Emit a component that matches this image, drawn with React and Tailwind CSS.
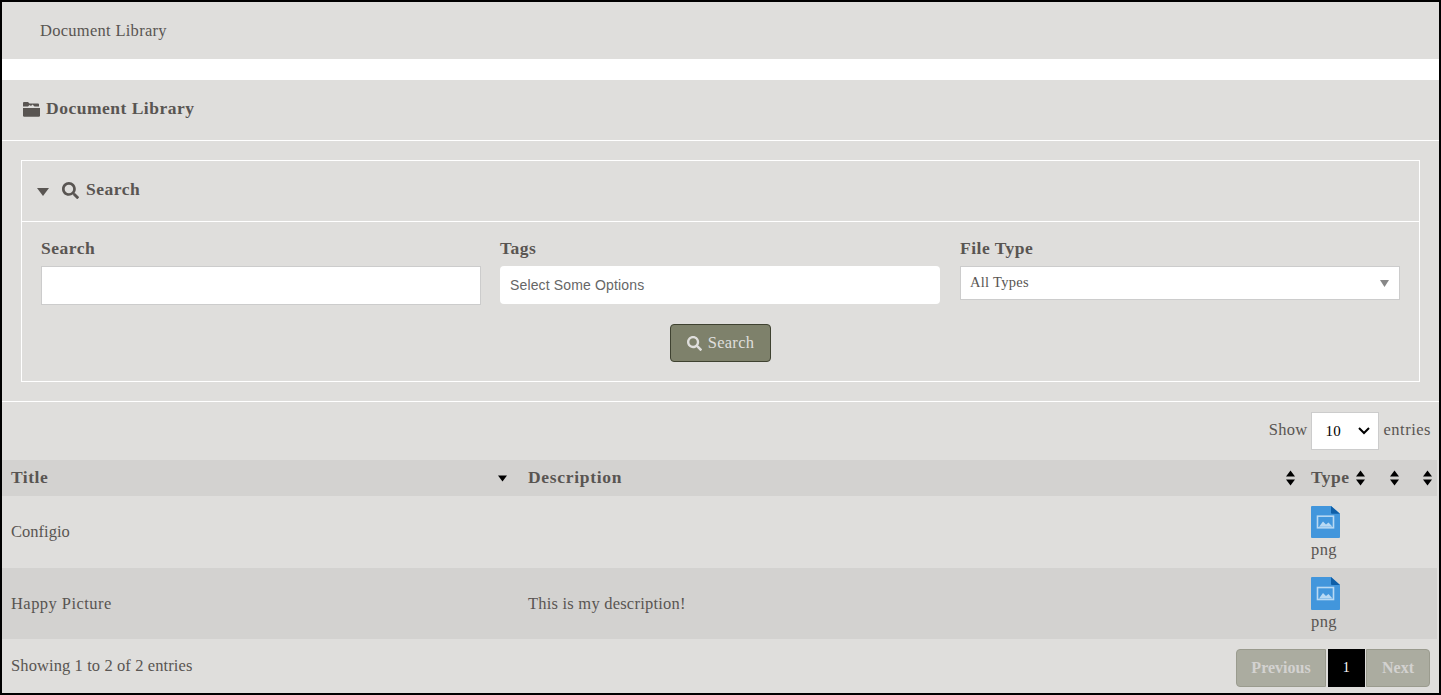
import React from "react";
import { FaSearch } from "react-icons/fa";

const serif = "font-['Georgia','Liberation_Serif',serif]";
const bold = "font-bold text-[17.5px] tracking-[0.5px]";

function Sort() {
  return (
    <svg width="9" height="16" viewBox="0 0 9 16" className="shrink-0" fill="#000">
      <path d="M4.5 0.5 L9 6.5 H0 Z" />
      <path d="M0 9.5 H9 L4.5 15.5 Z" />
    </svg>
  );
}

function DownOnly() {
  return (
    <svg width="9" height="7" viewBox="0 0 9 7" className="shrink-0" fill="#000"><path d="M0 0.5 H9 L4.5 6.5 Z" /></svg>
  );
}

function FileImg({ h }) {
  return (
    <svg width="29" height={h} viewBox="0 0 29 33" preserveAspectRatio="none">
      <path d="M1 0 H20 L29 8 V32 a1 1 0 0 1-1 1 H1 a1 1 0 0 1-1-1 V1 a1 1 0 0 1 1-1Z" fill="#4296dc" />
      <path d="M20 0 L29 8 H21 a1 1 0 0 1-1-1Z" fill="#0f5fa8" />
      <rect x="6.5" y="10.5" width="16" height="12" fill="none" stroke="#b9d9f3" strokeWidth="1.6" />
      <path d="M8 21.5 L12 16 L15 19 L17.5 17 L21.5 21.5Z" fill="#b9d9f3" />
    </svg>
  );
}

function FolderIcon() {
  return (
    <svg width="17" height="15" viewBox="0 0 17 15" fill="#595552">
      <path d="M0 4.5 V1 Q0 0 1 0 H5 L6.5 1.5 H15 Q16 1.5 16 2.5 V4.5 H11.5 L9.5 2.5 L8 4 L6.5 3 L5 4.5Z" />
      <path d="M0 6 H17 V13.5 Q17 14.8 15.7 14.8 H1.3 Q0 14.8 0 13.5Z" />
    </svg>
  );
}

export default function App() {
  return (
    <div className={`${serif} w-[1441px] h-[695px] overflow-hidden border-2 border-black bg-white text-[#595552] text-[16.5px] tracking-[0.28px] leading-none`}>
      <div className="h-[57px] bg-[#dfdedc] flex items-center pl-[38px] pt-[2px]">Document Library</div>
      <div className="h-[21px]" />
      <div className="bg-[#dfdedc] h-[613px] flex flex-col">
        <div className={`h-[61px] shrink-0 border-b border-white flex items-center pl-[21px] gap-[6px] pb-[2px] ${bold}`}>
          <FolderIcon />
          <span>Document Library</span>
        </div>
        <div className="h-[261px] shrink-0 border-b border-white px-[19px] pt-[19px]">
          <div className="h-[222px] border border-white flex flex-col">
            <div className={`h-[61px] shrink-0 border-b border-white flex items-center pl-[15px] pb-[2px] ${bold}`}>
              <svg width="12" height="8" viewBox="0 0 12 8" fill="#595552" className="mt-[3px]"><path d="M0 0 H12 L6 8Z" /></svg>
              <FaSearch className="ml-[13px] w-[17px] h-[17px]" />
              <span className="ml-[7px]">Search</span>
            </div>
            <div className="flex-1 px-[19px] pt-[18px]">
              <div className="grid grid-cols-[440px_440px_441px] gap-x-[19px]">
                <div>
                  <div className={`${bold} h-[26px]`}>Search</div>
                  <input aria-label="Search" className="block w-full h-[39px] bg-white border border-[#ccc]" />
                </div>
                <div>
                  <div className={`${bold} h-[26px]`}>Tags</div>
                  <div className="w-full h-[38px] bg-white rounded-[4px] flex items-center pl-[10px] font-['Liberation_Sans',sans-serif] tracking-[0.15px] text-[14px] text-[#666]">Select Some Options</div>
                </div>
                <div className="ml-px">
                  <div className={`${bold} h-[26px]`}>File Type</div>
                  <div className="w-full h-[34px] bg-white border border-[#ccc] flex items-center pl-[9px] pr-[10px] justify-between text-[14.5px]">
                    <span className="pb-[2px]">All Types</span>
                    <svg width="9" height="7" viewBox="0 0 9 7" fill="#888"><path d="M0 0 H9 L4.5 7Z" /></svg>
                  </div>
                </div>
              </div>
              <div className="flex justify-center mt-[19px]">
                <button className="w-[101px] h-[38px] rounded-[4px] bg-[#7e816b] border border-[#3f4231] text-[#dfdedc] flex items-center justify-center gap-[6px]">
                  <FaSearch className="w-[15px] h-[15px]" />
                  <span>Search</span>
                </button>
              </div>
            </div>
          </div>
        </div>
        <div className="h-[58px] shrink-0 flex items-center justify-end pr-[8px] gap-[3px]">
          <span className="pb-[2px]">Show</span>
          <div className="w-[68px] h-[38px] bg-white border border-[#ccc] flex items-center justify-between pl-[14px] pr-[8px] text-black text-[15px] mr-[2px]">
            <span>10</span>
            <svg width="12" height="8" viewBox="0 0 12 8" fill="none" stroke="#000" strokeWidth="2"><path d="M1 1 L6 6 L11 1" /></svg>
          </div>
          <span className="pb-[2px] tracking-[0.5px]">entries</span>
        </div>
        <div className="grid grid-cols-[517px_783px_68px_34px_33px] flex-1 content-start">
          <div className={`h-[36px] bg-[#d3d2d0] col-span-5 grid grid-cols-subgrid items-center ${bold}`}>
            <div className="pl-[9px] pr-[12px] flex justify-between items-center"><span>Title</span><DownOnly /></div>
            <div className="pl-[9px] pr-[7px] flex justify-between items-center"><span className="tracking-[0.7px]">Description</span><Sort /></div>
            <div className="pl-[9px] pr-[5px] flex justify-between items-center"><span>Type</span><Sort /></div>
            <div className="pr-[5px] flex justify-end"><Sort /></div>
            <div className="pr-[5px] flex justify-end"><Sort /></div>
          </div>
          <div className="h-[72px] col-span-5 grid grid-cols-subgrid items-center tracking-[0.02px]">
            <div className="pl-[9px]">Configio</div>
            <div className="pl-[9px]" />
            <div className="pl-[9px] flex flex-col gap-[4px] self-start pt-[10px] tracking-[0.4px]"><FileImg h={32} /><span>png</span></div>
          </div>
          <div className="h-[71px] bg-[#d3d2d0] col-span-5 grid grid-cols-subgrid items-center tracking-[0.22px]">
            <div className="pl-[9px] pt-[2px] tracking-[0.45px]">Happy Picture</div>
            <div className="pl-[9px] pt-[2px]">This is my description!</div>
            <div className="pl-[9px] flex flex-col gap-[4px] self-start pt-[9px] tracking-[0.4px]"><FileImg h={33} /><span>png</span></div>
          </div>
          <div className="h-[54px] col-span-5 flex items-center justify-between pl-[9px] pr-[7px]">
            <span className="tracking-[0.1px]">Showing 1 to 2 of 2 entries</span>
            <div className="flex items-center mt-[4px]">
              <div className="w-[90px] h-[38px] rounded-l-[4px] bg-[#abaca0] border border-[#9a9b8e] text-[#d3d2d0] font-bold tracking-normal flex items-center justify-center text-[16px] pb-[1px]">Previous</div>
              <div className="w-[37px] h-[38px] bg-black text-white flex items-center justify-center text-[14px] ml-[2px]">1</div>
              <div className="w-[64px] h-[38px] rounded-r-[4px] bg-[#abaca0] border border-[#9a9b8e] text-[#d3d2d0] font-bold tracking-normal flex items-center justify-center ml-[1px] text-[16px] pb-[1px]">Next</div>
            </div>
          </div>
        </div>
      </div>
    </div>
  );
}
